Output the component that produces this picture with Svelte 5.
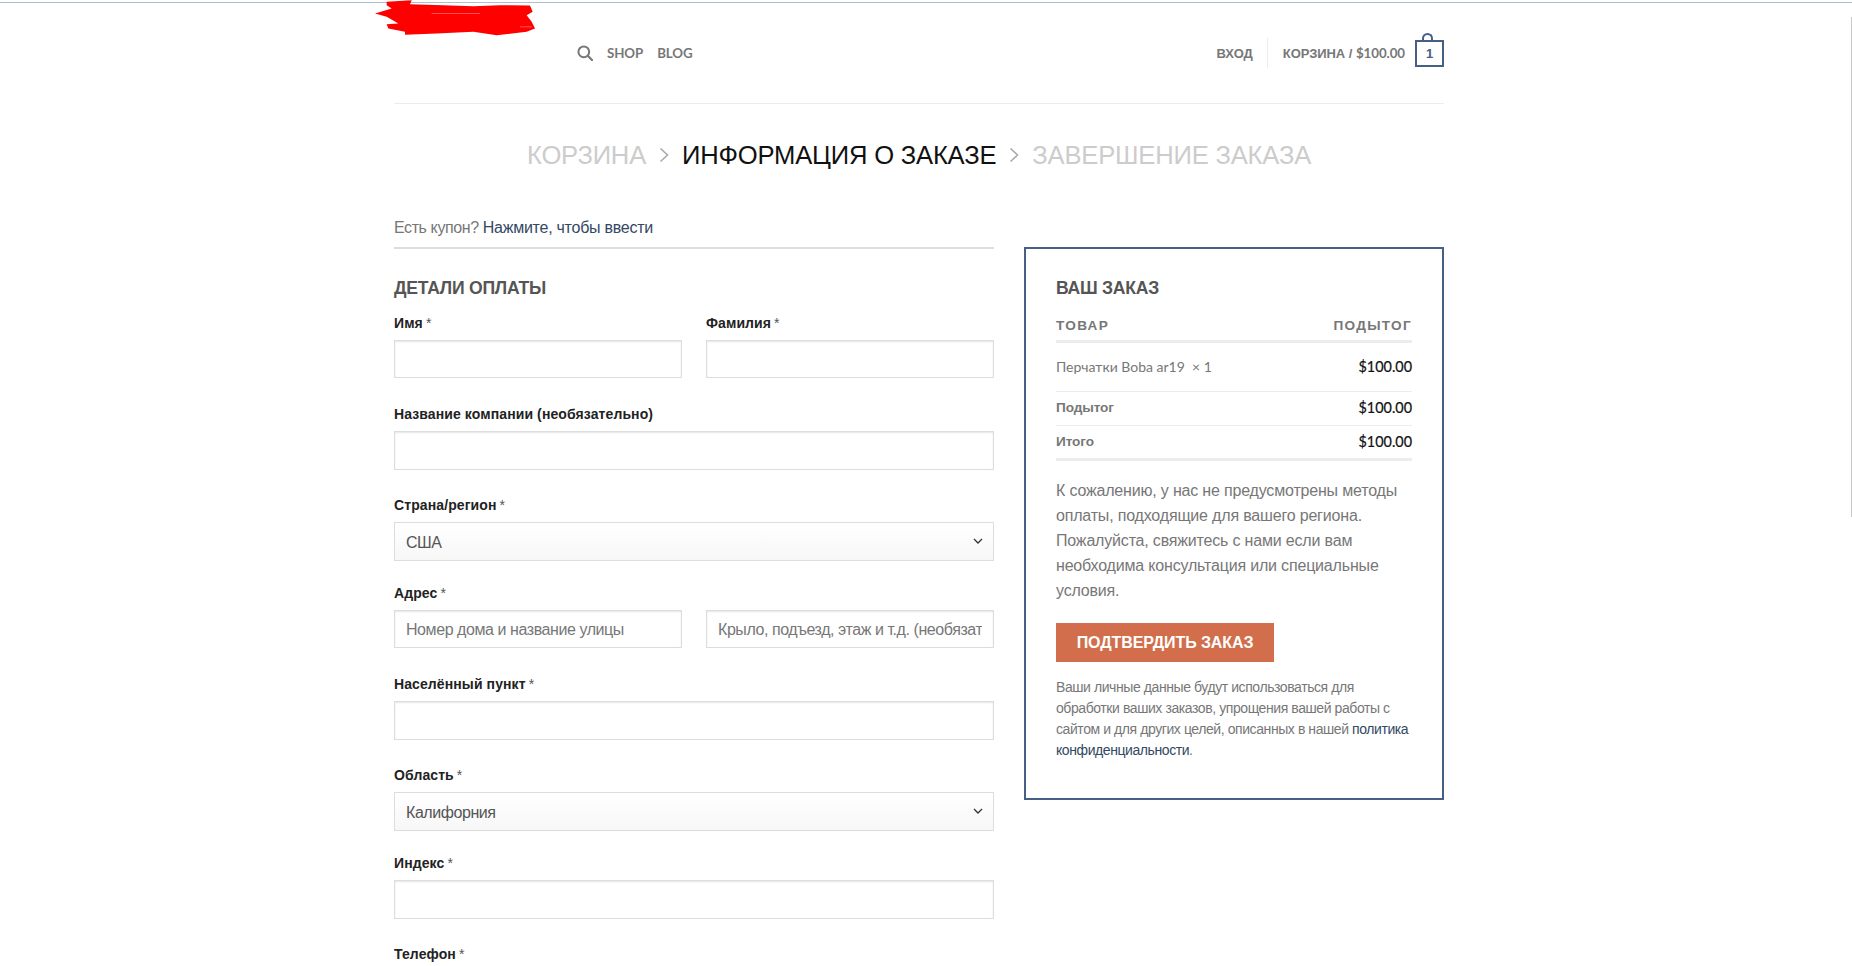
<script lang="ts">
	const rows = [
		{ label: 'Подытог', value: '$100.00' },
		{ label: 'Итого', value: '$100.00', last: true }
	];
</script>

<div class="page">
	<div class="topline"></div>
	<div class="scrollbar"></div>
	<div class="wrap">
		<header class="header">
			<a class="logo" href="#top" aria-label="logo">
				<svg viewBox="0 0 540 110" width="180" height="37" aria-hidden="true">
					<path
						fill="#f00"
						d="M80 5 155 0 150 12 250 15 340 18 420 15 510 16 518 35 500 45 515 65 525 85 500 95 410 105 340 95 230 100 135 104 135 95 85 85 80 72 115 70 80 50 45 40 95 25 80 15Z"
					/>
					<path stroke="#fff" stroke-width="1" d="M215 40H360M480 80H515" />
				</svg>
			</a>
			<nav class="nav">
				<svg class="search" viewBox="0 0 16 16" width="16" height="16" aria-hidden="true">
					<circle cx="6.8" cy="6.8" r="5.4" fill="none" stroke="#777" stroke-width="2" />
					<path d="M10.8 10.8 15 15" stroke="#777" stroke-width="2.2" stroke-linecap="round" />
				</svg>
				<a href="#shop">Shop</a>
				<a href="#blog">Blog</a>
			</nav>
			<div class="account">
				<a href="#login">Вход</a>
				<span class="divider"></span>
				<a href="#cart">Корзина / <span class="money">$100.00</span></a>
				<span class="cart-icon">1</span>
			</div>
		</header>

		<div class="steps">
			<span>Корзина</span>
			<svg viewBox="0 0 10 16" width="10" height="16" aria-hidden="true">
				<path d="M1.5 1.5 8.5 8 1.5 14.5" fill="none" stroke="#aaa" stroke-width="1.6" />
			</svg>
			<span class="current">Информация о заказе</span>
			<svg viewBox="0 0 10 16" width="10" height="16" aria-hidden="true">
				<path d="M1.5 1.5 8.5 8 1.5 14.5" fill="none" stroke="#aaa" stroke-width="1.6" />
			</svg>
			<span>Завершение заказа</span>
		</div>

		<main class="columns">
			<section class="billing">
				<div class="coupon">Есть купон? <a href="#coupon">Нажмите, чтобы ввести</a></div>
				<h3>Детали оплаты</h3>

				<div class="pair">
					<div class="field">
						<label for="first">Имя <abbr>*</abbr></label>
						<input id="first" type="text" />
					</div>
					<div class="field">
						<label for="last">Фамилия <abbr>*</abbr></label>
						<input id="last" type="text" />
					</div>
				</div>

				<div class="field">
					<label for="company">Название компании (необязательно)</label>
					<input id="company" type="text" />
				</div>

				<div class="field short">
					<label for="country">Страна/регион <abbr>*</abbr></label>
					<div class="select">
						<select id="country"><option>США</option></select>
						<svg viewBox="0 0 10 6" width="10" height="6" aria-hidden="true">
							<path d="M1 1 5 5 9 1" fill="none" stroke="#333" stroke-width="1.3" />
						</svg>
					</div>
				</div>

				<div class="field">
					<label for="street">Адрес <abbr>*</abbr></label>
					<div class="inputs">
						<input id="street" type="text" placeholder="Номер дома и название улицы" />
						<input type="text" placeholder="Крыло, подъезд, этаж и т.д. (необязательно)" />
					</div>
				</div>

				<div class="field">
					<label for="city">Населённый пункт <abbr>*</abbr></label>
					<input id="city" type="text" />
				</div>

				<div class="field short">
					<label for="state">Область <abbr>*</abbr></label>
					<div class="select">
						<select id="state"><option>Калифорния</option></select>
						<svg viewBox="0 0 10 6" width="10" height="6" aria-hidden="true">
							<path d="M1 1 5 5 9 1" fill="none" stroke="#333" stroke-width="1.3" />
						</svg>
					</div>
				</div>

				<div class="field">
					<label for="zip">Индекс <abbr>*</abbr></label>
					<input id="zip" type="text" />
				</div>

				<div class="field">
					<label for="phone">Телефон <abbr>*</abbr></label>
					<input id="phone" type="text" />
				</div>
			</section>

			<aside class="order">
				<h3>Ваш заказ</h3>
				<div class="order-head">
					<span>Товар</span>
					<span>Подытог</span>
				</div>
				<div class="order-item">
					<span>Перчатки Boba ar19&nbsp; × 1</span>
					<b>$100.00</b>
				</div>
				{#each rows as row}
					<div class="order-row" class:last={row.last}>
						<span>{row.label}</span>
						<b>{row.value}</b>
					</div>
				{/each}
				<p class="notice">
					К сожалению, у нас не предусмотрены методы оплаты, подходящие для вашего региона.
					Пожалуйста, свяжитесь с нами если вам необходима консультация или специальные условия.
				</p>
				<button class="confirm" type="button">Подтвердить заказ</button>
				<p class="privacy">
					Ваши личные данные будут использоваться для обработки ваших заказов, упрощения вашей
					работы с сайтом и для других целей, описанных в нашей
					<a href="#privacy">политика конфиденциальности</a>.
				</p>
			</aside>
		</main>
	</div>
</div>

<style>
	:global(body) {
		margin: 0;
		background: #fff;
		overflow: hidden;
	}

	.page {
		position: relative;
		height: 966px;
		overflow: hidden;
		padding-top: 2px;
		box-sizing: border-box;
		font-family: Lato, 'Liberation Sans', sans-serif;
		color: #777;
	}

	.topline {
		height: 1px;
		background: #aebfd0;
	}

	.scrollbar {
		position: absolute;
		top: 17px;
		right: 0;
		width: 1px;
		height: 500px;
		background: #c8c8c8;
	}

	.wrap {
		width: 1050px;
		margin-left: 394px;
	}

	a {
		text-decoration: none;
		color: inherit;
	}

	.header {
		display: flex;
		align-items: center;
		height: 100px;
		border-bottom: 1px solid #ececec;
		font-size: 13.3px;
		font-weight: 700;
		text-transform: uppercase;
		letter-spacing: -0.1px;
		color: #777;
	}

	.logo {
		position: relative;
		width: 183px;
		align-self: stretch;
	}

	.logo svg {
		position: absolute;
		left: -34px;
		top: -3px;
	}

	.nav {
		display: flex;
		align-items: center;
		gap: 14px;
		margin-top: -1px;
	}

	.search {
		flex: none;
		margin-top: 1px;
	}

	.account {
		display: flex;
		align-items: center;
		margin-left: auto;
		font-family: 'Liberation Sans', sans-serif;
		font-size: 13px;
		letter-spacing: -0.05px;
	}

	.money {
		font-family: Lato, sans-serif;
		font-size: 13.3px;
	}

	.divider {
		width: 1px;
		height: 30px;
		background: #ececec;
		margin: 0 15px 0 14px;
	}

	.cart-icon {
		position: relative;
		box-sizing: border-box;
		width: 29px;
		height: 27px;
		margin-left: 10px;
		border: 2px solid #446084;
		color: #446084;
		font-size: 13px;
		line-height: 23px;
		text-align: center;
	}

	.cart-icon::before {
		content: '';
		position: absolute;
		left: 5px;
		top: -9px;
		width: 11px;
		height: 7px;
		border: 2px solid #446084;
		border-bottom: 0;
		border-radius: 7px 7px 0 0;
		box-sizing: border-box;
	}

	.steps {
		display: flex;
		justify-content: center;
		align-items: center;
		gap: 13px;
		height: 30px;
		margin-top: 36px;
		font-family: 'Liberation Sans', sans-serif;
		font-size: 25.6px;
		letter-spacing: -0.2px;
		text-transform: uppercase;
		color: #ccc;
	}

	.steps .current {
		color: #111;
	}

	.columns {
		display: grid;
		grid-template-columns: 600px 420px;
		gap: 30px;
		margin-top: 45px;
		align-items: start;
	}

	.coupon {
		height: 23px;
		padding-top: 1px;
		padding-bottom: 8px;
		border-bottom: 2px solid #ddd;
		font-family: 'Liberation Sans', sans-serif;
		font-size: 16px;
		line-height: 24px;
		letter-spacing: -0.4px;
	}

	.coupon a {
		color: #334862;
		letter-spacing: -0.25px;
	}

	h3 {
		margin: 28px 0 0;
		height: 20px;
		font-family: 'Liberation Sans', sans-serif;
		font-size: 17.6px;
		line-height: 22px;
		font-weight: 700;
		letter-spacing: -0.25px;
		text-transform: uppercase;
		color: #555;
	}

	.pair {
		display: grid;
		grid-template-columns: 1fr 1fr;
		gap: 24px;
		margin-top: 17px;
	}

	.field {
		margin-bottom: 26px;
	}

	.field.short {
		margin-bottom: 23px;
	}

	label {
		display: block;
		height: 18px;
		margin-bottom: 8px;
		font-family: 'Liberation Sans', sans-serif;
		font-size: 14px;
		line-height: 18px;
		font-weight: 700;
		letter-spacing: 0.1px;
		color: #222;
	}

	abbr {
		margin-left: -1px;
		font-weight: 400;
		color: #555;
	}

	input,
	select {
		display: block;
		box-sizing: border-box;
		width: 100%;
		height: 39px;
		padding: 0 11px;
		border: 1px solid #ddd;
		border-radius: 0;
		box-shadow: inset 0 1px 2px rgba(0, 0, 0, 0.1);
		background: #fff;
		font-family: 'Liberation Sans', sans-serif;
		font-size: 16px;
		letter-spacing: -0.43px;
		color: #333;
		outline: none;
	}

	.pair input,
	.inputs input {
		height: 38px;
		padding-top: 1px;
		margin-bottom: 1px;
	}

	input::placeholder {
		color: #777;
		opacity: 1;
	}

	.inputs {
		display: grid;
		grid-template-columns: 1fr 1fr;
		gap: 24px;
	}

	.select {
		position: relative;
	}

	.select select {
		appearance: none;
		padding-top: 1px;
		background: linear-gradient(#fff, #f7f7f7);
		box-shadow: none;
		color: #555;
	}

	.select svg {
		position: absolute;
		right: 11px;
		top: 16px;
	}

	.order {
		box-sizing: border-box;
		margin-top: 32px;
		padding: 0 30px 37px;
		border: 2px solid #446084;
		font-family: Lato, 'Liberation Sans', sans-serif;
	}

	.order-head,
	.order-item,
	.order-row {
		display: flex;
		justify-content: space-between;
		align-items: center;
	}

	.order-head {
		margin-top: 18px;
		height: 21px;
		padding-bottom: 4px;
		border-bottom: 3px solid #ececec;
		font-family: 'Liberation Sans', sans-serif;
		font-size: 13.6px;
		font-weight: 700;
		letter-spacing: 1.3px;
		text-transform: uppercase;
		color: #777;
	}

	.order-item {
		height: 46px;
		padding-bottom: 2px;
		border-bottom: 1px solid #ececec;
		font-size: 14px;
	}

	.order-row {
		height: 31px;
		padding-bottom: 2px;
		border-bottom: 1px solid #ececec;
		font-size: 14px;
	}

	.order-row span {
		font-family: 'Liberation Sans', sans-serif;
		font-weight: 700;
		font-size: 13.6px;
		letter-spacing: -0.1px;
	}

	.order-row.last {
		height: 30px;
		border-bottom: 3px solid #ececec;
	}

	.order b {
		font-weight: 400;
		font-size: 14.4px;
		color: #111;
		-webkit-text-stroke: 0.2px #111;
	}

	.notice {
		margin: 17px 0 0;
		font-family: 'Liberation Sans', sans-serif;
		font-size: 16px;
		line-height: 25px;
		letter-spacing: -0.18px;
	}

	.confirm {
		display: block;
		width: 218px;
		height: 39px;
		margin-top: 20px;
		padding: 0;
		border: 0;
		background: #d26e4b;
		font-family: 'Liberation Sans', sans-serif;
		font-size: 16px;
		font-weight: 700;
		letter-spacing: -0.1px;
		text-transform: uppercase;
		color: #fff;
	}

	.privacy {
		margin: 15px 0 0;
		font-family: 'Liberation Sans', sans-serif;
		font-size: 14px;
		line-height: 21px;
		letter-spacing: -0.42px;
	}

	.privacy a {
		color: #334862;
	}
</style>
